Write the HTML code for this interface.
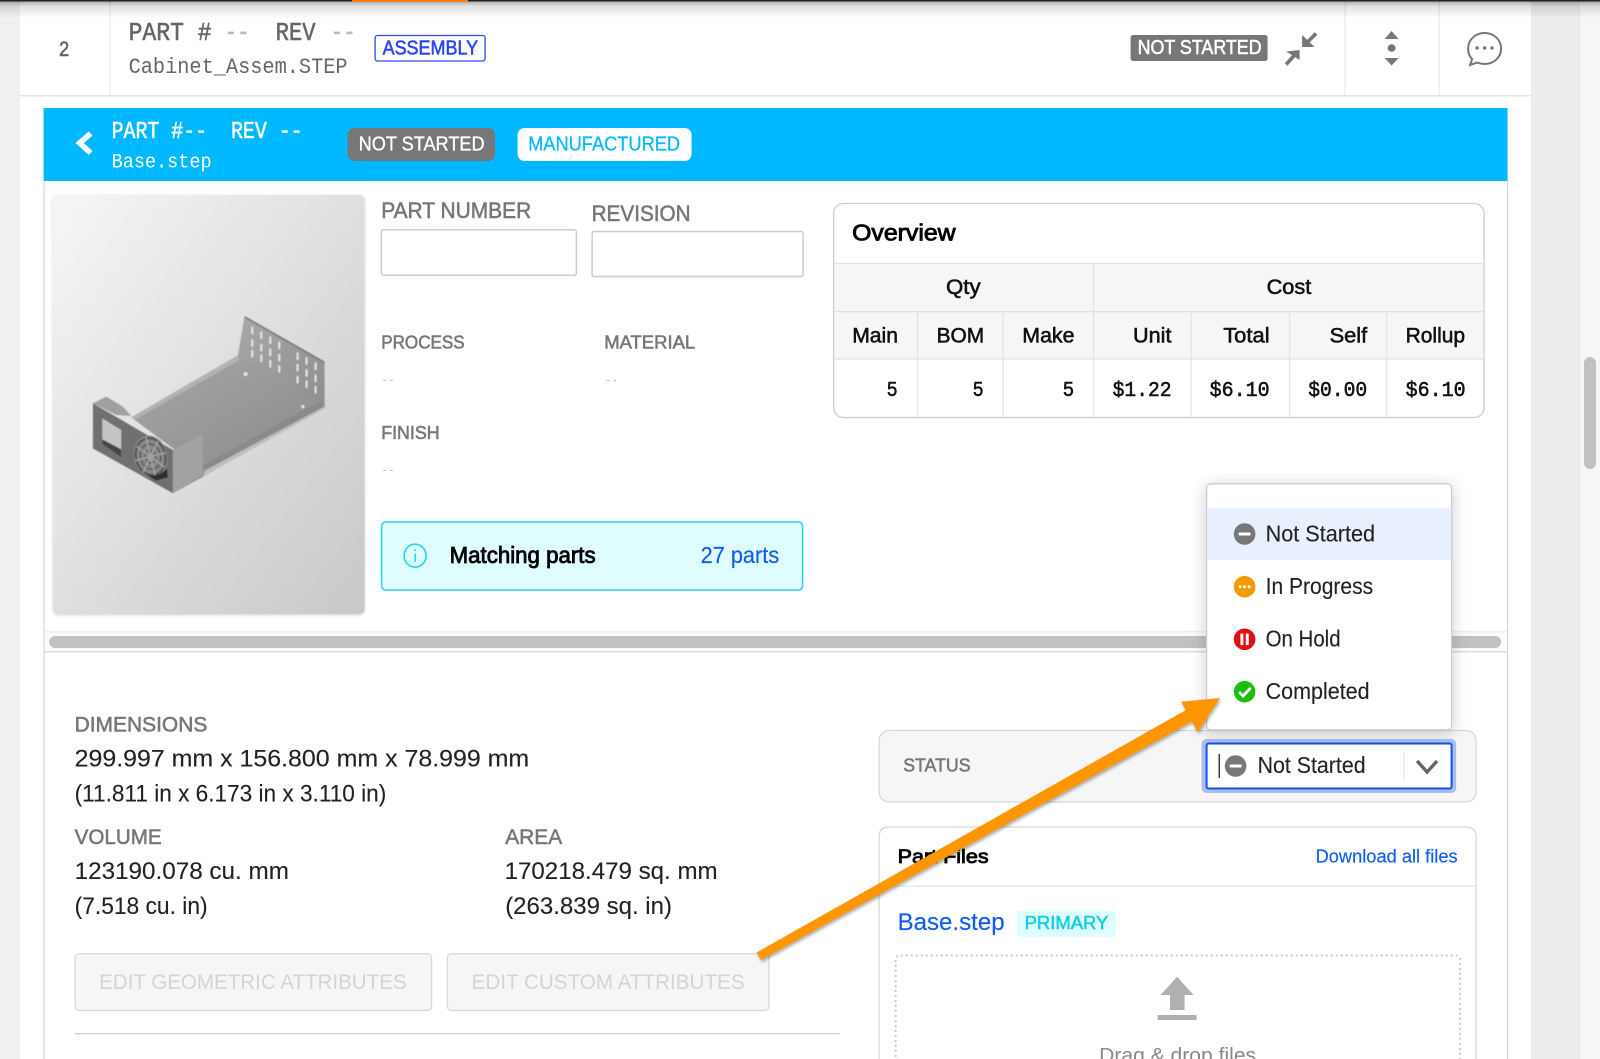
<!DOCTYPE html>
<html lang="en">
<head>
<meta charset="utf-8">
<title>Part detail</title>
<style>
html,body{margin:0;padding:0;background:#fff;width:1600px;height:1059px;overflow:hidden}
svg{display:block;position:absolute;left:0;top:0;filter:blur(.35px)}
text{font-family:"Liberation Sans",sans-serif;white-space:pre}
text.mono{font-family:"Liberation Mono",monospace}
.m{stroke:currentColor;stroke-width:.55}
.b{stroke:currentColor;stroke-width:.85}
.lbl{fill:#777;color:#777}
.val{fill:#222;color:#222;stroke:#222;stroke-width:.12}
.blue{fill:#0d5df0;color:#0d5df0;stroke:#0d5df0;stroke-width:.15}
</style>
</head>
<body>
<svg width="1600" height="1059" viewBox="0 0 1600 1059" xmlns="http://www.w3.org/2000/svg">
<defs>
<linearGradient id="top" x1="0" y1="0" x2="0" y2="1"><stop offset="0" stop-color="#000" stop-opacity=".38"/><stop offset=".35" stop-color="#000" stop-opacity=".12"/><stop offset="1" stop-color="#000" stop-opacity="0"/></linearGradient>
<linearGradient id="card" x1="0" y1="0" x2="1" y2="1"><stop offset="0" stop-color="#f6f6f6"/><stop offset="1" stop-color="#c8c8c8"/></linearGradient>
<linearGradient id="floor" x1="0" y1="0" x2="1" y2="1"><stop offset="0" stop-color="#a6a6a6"/><stop offset="1" stop-color="#8c8c8c"/></linearGradient>
<linearGradient id="wall" x1="0" y1="0" x2="1" y2="1"><stop offset="0" stop-color="#a8a8a8"/><stop offset="1" stop-color="#8e8e8e"/></linearGradient>
<filter id="soft" x="-5%" y="-5%" width="110%" height="110%"><feGaussianBlur stdDeviation="1.2"/></filter>
<filter id="sh" x="-10%" y="-10%" width="130%" height="120%"><feDropShadow dx="0" dy="3" stdDeviation="8" flood-color="#000" flood-opacity=".2"/></filter>
<filter id="ash" x="-5%" y="-5%" width="110%" height="115%"><feDropShadow dx="1" dy="2" stdDeviation="1.5" flood-color="#000" flood-opacity=".35"/></filter>
<filter id="cs" x="-5%" y="-5%" width="110%" height="110%"><feDropShadow dx="0" dy="1" stdDeviation="1.5" flood-color="#000" flood-opacity=".18"/></filter>
</defs>

<!-- page gutters -->
<rect x="0" y="0" width="1600" height="1059" fill="#fff"/>
<rect x="0" y="0" width="20" height="1059" fill="#f0f0f0"/>
<rect x="1531" y="0" width="48" height="1059" fill="#ededed"/>
<rect x="1579" y="0" width="21" height="1059" fill="#f6f6f6"/>
<rect x="1579" y="0" width="1" height="1059" fill="#e6e6e6"/>
<rect x="1584" y="357" width="12" height="112" rx="6" fill="#c1c1c1"/>

<g transform="translate(-.4 0)">
<!-- list row -->
<rect x="20" y="95" width="1511" height="1.5" fill="#e4e4e4"/>
<rect x="110" y="0" width="1" height="95" fill="#e4e4e4"/>
<rect x="1345" y="0" width="1" height="95" fill="#e4e4e4"/>
<rect x="1439" y="0" width="1" height="95" fill="#e4e4e4"/>
<text class="mono m" x="59" y="56" font-size="22" fill="#666" color="#666" textLength="11" lengthAdjust="spacingAndGlyphs">2</text>
<text class="mono m" x="129" y="40" font-size="26" fill="#666" color="#666" textLength="83" lengthAdjust="spacingAndGlyphs">PART #</text>
<text class="mono m" x="225" y="40" font-size="26" fill="#bbb" color="#bbb" textLength="25" lengthAdjust="spacingAndGlyphs">--</text>
<text class="mono m" x="276" y="40" font-size="26" fill="#666" color="#666" textLength="40" lengthAdjust="spacingAndGlyphs">REV</text>
<text class="mono m" x="331" y="40" font-size="26" fill="#bbb" color="#bbb" textLength="25" lengthAdjust="spacingAndGlyphs">--</text>
<text class="mono" x="129" y="73" font-size="22" fill="#666" textLength="219" lengthAdjust="spacingAndGlyphs">Cabinet_Assem.STEP</text>
<rect x="375.5" y="35.5" width="110" height="25.5" rx="2.5" fill="#fff" stroke="#2b4bf0" stroke-width="1.3"/>
<text class="m" x="383" y="54.3" font-size="20" fill="#2b45f0" color="#2b45f0" textLength="95.5" lengthAdjust="spacingAndGlyphs">ASSEMBLY</text>
<rect x="1131" y="35" width="137" height="26" rx="2.5" fill="#777"/>
<text class="m" x="1138" y="54" font-size="20" fill="#fff" color="#fff" textLength="124" lengthAdjust="spacingAndGlyphs">NOT STARTED</text>
<!-- compress icon -->
<g fill="#777" stroke="none">
<path d="M1302.5 35 L1302.5 47 L1315 47 Z"/>
<path d="M1306 44 L1316.500 33.500" stroke="#777" stroke-width="3.6"/>
<path d="M1300 50 L1286.5 51.500 L1300 60 Z"/>
<path d="M1296 54 L1286.500 64.500" stroke="#777" stroke-width="3.6"/>
</g>
<!-- sort icon -->
<path d="M1392 31 L1399 39 L1385 39 Z" fill="#777"/>
<ellipse cx="1392" cy="48" rx="4" ry="3.8" fill="#777"/>
<path d="M1385 58 L1399 58 L1392 65.5 Z" fill="#777"/>
<!-- chat icon -->
<path d="M1485 33 C1475.5 33 1468.5 40 1468.5 48.5 C1468.5 53 1470 56.5 1472.5 59 L1470.5 65 L1477.5 62.5 C1480 63.5 1482.5 64 1485 64 C1494.5 64 1501.5 57 1501.5 48.5 C1501.5 40 1494.5 33 1485 33 Z" fill="none" stroke="#777" stroke-width="2"/>
<circle cx="1477.5" cy="48" r="1.7" fill="#777"/><circle cx="1485" cy="48" r="1.7" fill="#777"/><circle cx="1492.5" cy="48" r="1.7" fill="#777"/>

<!-- detail panel frame -->
<rect x="44" y="181" width="1" height="878" fill="#cfcfcf"/>
<rect x="1507.5" y="181" width="1" height="878" fill="#cfcfcf"/>
<rect x="44" y="108" width="1464" height="73" fill="#00b8ff"/>
<path d="M91 133.5 L80 143 L91 153" fill="none" stroke="#fff" stroke-width="5.5"/>
<text class="mono m" x="112" y="138" font-size="24" fill="#fff" color="#fff" textLength="191" lengthAdjust="spacingAndGlyphs">PART #--  REV --</text>
<text class="mono" x="112" y="167.5" font-size="20.5" fill="#fff" textLength="100" lengthAdjust="spacingAndGlyphs">Base.step</text>
<rect x="348" y="128" width="147.5" height="33" rx="7" fill="#777"/>
<text class="m" style="stroke-width:.3" x="359" y="150.3" font-size="20" fill="#fff" color="#fff" textLength="126" lengthAdjust="spacingAndGlyphs">NOT STARTED</text>
<rect x="518" y="128" width="174" height="33" rx="7" fill="#fff"/>
<text class="m" style="stroke-width:.25" x="528.5" y="150.3" font-size="20" fill="#00b8ff" color="#00b8ff" textLength="152" lengthAdjust="spacingAndGlyphs">MANUFACTURED</text>

<!-- part image card -->
<rect x="53.5" y="195" width="311.5" height="419" rx="5" fill="url(#card)" filter="url(#cs)"/>
<g transform="translate(60 280) scale(.3333)" filter="url(#soft)">
<path d="M430 552 L780 362 L797 378 L430 590 L340 640 Z" fill="#8a8a8a"/>
<path d="M435 572 L797 378 L798 384 L430 590 Z" fill="#bdbdbd"/>
<path d="M215 412 L535 226 L780 364 L430 555 L340 505 Z" fill="url(#floor)"/>
<path d="M215 412 L535 226 L540 240 L225 420 Z" fill="#b2b2b2"/>
<path d="M555 108 L795 245 L795 378 L775 362 L550 235 L535 226 Z" fill="url(#wall)"/>
<path d="M555 108 L795 245 L795 250 L555 113 Z" fill="#777"/>
<g fill="#e6e6e6">
<rect x="575" y="140" width="6" height="22"/><rect x="575" y="178" width="6" height="22"/><rect x="575" y="210" width="6" height="22"/>
<rect x="602" y="155" width="6" height="22"/><rect x="602" y="192" width="6" height="22"/><rect x="602" y="224" width="6" height="22"/>
<rect x="629" y="170" width="6" height="22"/><rect x="629" y="206" width="6" height="22"/><rect x="629" y="240" width="6" height="22"/>
<rect x="656" y="185" width="6" height="22"/><rect x="656" y="222" width="6" height="22"/><rect x="656" y="256" width="6" height="22"/>
<rect x="711" y="218" width="6" height="22"/><rect x="711" y="252" width="6" height="22"/><rect x="711" y="288" width="6" height="22"/>
<rect x="738" y="232" width="6" height="22"/><rect x="738" y="268" width="6" height="22"/><rect x="738" y="302" width="6" height="22"/>
<rect x="765" y="248" width="6" height="22"/><rect x="765" y="284" width="6" height="22"/><rect x="765" y="318" width="6" height="22"/>
</g>
<circle cx="558" cy="282" r="6" fill="#e4e4e4"/><circle cx="730" cy="380" r="5" fill="#e4e4e4"/>
<path d="M100 370 L140 350 L190 380 L215 408 L170 405 Z" fill="#a0a0a0"/>
<path d="M340 510 L430 460 L430 585 L340 640 Z" fill="#a2a2a2"/>
<path d="M100 370 L340 510 L340 640 L100 505 Z" fill="#707070"/>
<path d="M128 415 L185 450 L185 532 L128 492 Z" fill="#c4c4c4"/>
<path d="M128 478 L185 508 L185 532 L128 492 Z" fill="#444"/>
<g transform="rotate(-14 273 530)" fill="none">
<ellipse cx="273" cy="530" rx="50" ry="64" fill="#888"/>
<ellipse cx="273" cy="530" rx="44" ry="56" stroke="#505050" stroke-width="6"/>
<ellipse cx="273" cy="530" rx="30" ry="38" stroke="#606060" stroke-width="5"/>
<ellipse cx="273" cy="530" rx="15" ry="19" stroke="#606060" stroke-width="5"/>
<path d="M273 470 V590 M225 530 H320 M240 490 L306 570 M306 490 L240 570" stroke="#a2a2a2" stroke-width="5"/>
</g>
<path d="M238 572 Q285 605 322 565 L325 592 L290 602 Z" fill="#2e2e2e"/>
</g>

<!-- form fields -->
<text class="lbl m" x="381.6" y="218" font-size="22.5" textLength="150" lengthAdjust="spacingAndGlyphs">PART NUMBER</text>
<rect x="381.8" y="229.8" width="195" height="45.5" rx="2" fill="#fff" stroke="#ccc" stroke-width="1.5"/>
<text class="lbl m" x="592" y="221" font-size="22.5" textLength="99" lengthAdjust="spacingAndGlyphs">REVISION</text>
<rect x="592.5" y="231.5" width="211" height="45" rx="2" fill="#fff" stroke="#ccc" stroke-width="1.5"/>
<text class="lbl m" x="381.6" y="348.3" font-size="18" textLength="83.5" lengthAdjust="spacingAndGlyphs">PROCESS</text>
<text class="lbl m" x="604.6" y="348.3" font-size="18" textLength="91" lengthAdjust="spacingAndGlyphs">MATERIAL</text>
<text class="lbl m" x="381.6" y="439" font-size="18" textLength="58.5" lengthAdjust="spacingAndGlyphs">FINISH</text>
<text class="mono" x="381.6" y="384" font-size="14" fill="#c4c4c4" textLength="13.500" lengthAdjust="spacingAndGlyphs">--</text>
<text class="mono" x="605" y="384" font-size="14" fill="#c4c4c4" textLength="13.500" lengthAdjust="spacingAndGlyphs">--</text>
<text class="mono" x="381.6" y="474" font-size="14" fill="#c4c4c4" textLength="13.500" lengthAdjust="spacingAndGlyphs">--</text>

<!-- matching parts -->
<rect x="382" y="522" width="421" height="68" rx="4" fill="#dffcfe" stroke="#1fd6e4" stroke-width="1.5"/>
<ellipse cx="415.5" cy="555.7" rx="11" ry="11.5" fill="none" stroke="#1fd6e4" stroke-width="1.6"/>
<rect x="414.8" y="553.5" width="1.5" height="8.5" fill="#1fd6e4"/><rect x="414.8" y="549" width="1.5" height="2" fill="#1fd6e4"/>
<text class="b" x="450" y="563" font-size="23" fill="#000" color="#000" textLength="146" lengthAdjust="spacingAndGlyphs">Matching parts</text>
<text class="blue" x="701" y="563" font-size="23" textLength="78.6" lengthAdjust="spacingAndGlyphs">27 parts</text>

<!-- overview -->
<rect x="834" y="203.5" width="650.5" height="214" rx="10" fill="#fff" stroke="#ccc" stroke-width="1.3"/>
<path d="M834.7 263.5 H1484 V359 H834.7 Z" fill="#f6f6f6"/>
<path d="M834 263.5 H1484.5 M834 311.7 H1484.5 M834 359 H1484.5" stroke="#e2e2e2" stroke-width="1.3" fill="none"/>
<path d="M1094 263.5 V417 M918 311.7 V417 M1003.5 311.7 V417 M1191.5 311.7 V417 M1290 311.7 V417 M1387 311.7 V417" stroke="#e4e4e4" stroke-width="1.3" fill="none"/>
<text class="b" x="852.5" y="240.7" font-size="23" fill="#000" color="#000" textLength="103.5" lengthAdjust="spacingAndGlyphs">Overview</text>
<g fill="#111" color="#111" font-size="21">
<text class="m" x="946.4" y="294" textLength="34.6" lengthAdjust="spacingAndGlyphs">Qty</text>
<text class="m" x="1267" y="294" textLength="44.7" lengthAdjust="spacingAndGlyphs">Cost</text>
<text class="m" x="852.6" y="342.3" textLength="45.8" lengthAdjust="spacingAndGlyphs">Main</text>
<text class="m" x="937" y="342.3" textLength="47.6" lengthAdjust="spacingAndGlyphs">BOM</text>
<text class="m" x="1022.7" y="342.3" textLength="52.2" lengthAdjust="spacingAndGlyphs">Make</text>
<text class="m" x="1133.4" y="342.3" textLength="38.5" lengthAdjust="spacingAndGlyphs">Unit</text>
<text class="m" x="1223.6" y="342.3" textLength="46.4" lengthAdjust="spacingAndGlyphs">Total</text>
<text class="m" x="1330" y="342.3" textLength="37.6" lengthAdjust="spacingAndGlyphs">Self</text>
<text class="m" x="1406" y="342.3" textLength="59.5" lengthAdjust="spacingAndGlyphs">Rollup</text>
</g>
<g fill="#111" color="#111" font-size="21.5">
<text class="mono m" x="887" y="396" textLength="11" lengthAdjust="spacingAndGlyphs">5</text>
<text class="mono m" x="973" y="396" textLength="11" lengthAdjust="spacingAndGlyphs">5</text>
<text class="mono m" x="1063" y="396" textLength="11.5" lengthAdjust="spacingAndGlyphs">5</text>
<text class="mono m" x="1113" y="396" textLength="59" lengthAdjust="spacingAndGlyphs">$1.22</text>
<text class="mono m" x="1210" y="396" textLength="60" lengthAdjust="spacingAndGlyphs">$6.10</text>
<text class="mono m" x="1308.6" y="396" textLength="59" lengthAdjust="spacingAndGlyphs">$0.00</text>
<text class="mono m" x="1406" y="396" textLength="60" lengthAdjust="spacingAndGlyphs">$6.10</text>
</g>

<!-- horizontal scrollbar -->
<rect x="45" y="631" width="1462" height="21" fill="#fbfbfb"/>
<rect x="45" y="631" width="1462" height="1.5" fill="#eee"/>
<rect x="45" y="651" width="1462" height="1.5" fill="#dcdcdc"/>
<rect x="49.5" y="636" width="1452" height="12" rx="6" fill="#c1c1c1"/>

<!-- attributes -->
<text class="lbl m" x="75" y="731.7" font-size="21.5" textLength="132.7" lengthAdjust="spacingAndGlyphs">DIMENSIONS</text>
<text class="val" x="75" y="766.7" font-size="24" textLength="454.6" lengthAdjust="spacingAndGlyphs">299.997 mm x 156.800 mm x 78.999 mm</text>
<text class="val" x="75" y="801.7" font-size="24" textLength="311.7" lengthAdjust="spacingAndGlyphs">(11.811 in x 6.173 in x 3.110 in)</text>
<text class="lbl m" x="75" y="844" font-size="21.5" textLength="87" lengthAdjust="spacingAndGlyphs">VOLUME</text>
<text class="lbl m" x="505.6" y="844" font-size="21.5" textLength="57" lengthAdjust="spacingAndGlyphs">AREA</text>
<text class="val" x="75" y="879" font-size="24" textLength="214.3" lengthAdjust="spacingAndGlyphs">123190.078 cu. mm</text>
<text class="val" x="505" y="879" font-size="24" textLength="213" lengthAdjust="spacingAndGlyphs">170218.479 sq. mm</text>
<text class="val" x="75" y="914" font-size="24" textLength="133" lengthAdjust="spacingAndGlyphs">(7.518 cu. in)</text>
<text class="val" x="505.6" y="914" font-size="24" textLength="166.8" lengthAdjust="spacingAndGlyphs">(263.839 sq. in)</text>
<rect x="75.5" y="953.8" width="356.5" height="56.7" rx="4" fill="#f6f6f6" stroke="#d8d8d8" stroke-width="1.3"/>
<text x="99.5" y="989" font-size="21.5" fill="#d4d4d4" textLength="307.5" lengthAdjust="spacingAndGlyphs">EDIT GEOMETRIC ATTRIBUTES</text>
<rect x="447.8" y="953.8" width="321.5" height="56.7" rx="4" fill="#f6f6f6" stroke="#d8d8d8" stroke-width="1.3"/>
<text x="472" y="989" font-size="21.5" fill="#d4d4d4" textLength="273" lengthAdjust="spacingAndGlyphs">EDIT CUSTOM ATTRIBUTES</text>
<rect x="75" y="1033" width="765" height="1.3" fill="#cfcfcf"/>

<!-- status -->
<rect x="879.5" y="730.5" width="597" height="71.5" rx="10" fill="#f6f6f6" stroke="#d8d8d8" stroke-width="1.3"/>
<text class="lbl m" x="903.6" y="771.7" font-size="18" textLength="67.4" lengthAdjust="spacingAndGlyphs">STATUS</text>
<rect x="1202" y="739" width="254.6" height="54" rx="5" fill="#a9bdf3"/>
<rect x="1207" y="743.5" width="245" height="45" rx="2" fill="#fff" stroke="#1a50e8" stroke-width="2"/>
<rect x="1219" y="754" width="1.3" height="24" fill="#222"/>
<circle cx="1236" cy="766" r="10.8" fill="#777"/><rect x="1230" y="764.5" width="12" height="3" rx="1" fill="#fff"/>
<text class="val" x="1258" y="773" font-size="23" textLength="108" lengthAdjust="spacingAndGlyphs">Not Started</text>
<rect x="1404" y="752" width="1" height="28" fill="#ddd"/>
<path d="M1417.5 761 L1427.5 772 L1437.5 761" fill="none" stroke="#666" stroke-width="3.4"/>

<!-- part files -->
<path d="M879.5 1062 V837 Q879.5 827 889.5 827 H1466.5 Q1476.5 827 1476.5 837 V1062" fill="#fff" stroke="#d8d8d8" stroke-width="1.3"/>
<rect x="880" y="885.5" width="596" height="1.3" fill="#e6e6e6"/>
<text class="b" x="898" y="863" font-size="19.5" fill="#000" color="#000" textLength="91" lengthAdjust="spacingAndGlyphs">Part Files</text>
<text class="blue" x="1316" y="862.7" font-size="18.5" textLength="142" lengthAdjust="spacingAndGlyphs">Download all files</text>
<text class="blue" x="898" y="930" font-size="24.5" textLength="107" lengthAdjust="spacingAndGlyphs">Base.step</text>
<rect x="1017" y="910.7" width="99" height="26" rx="3" fill="#dffcfe"/>
<text class="m" x="1025" y="929" font-size="18.5" fill="#10d0e0" color="#10d0e0" textLength="83.7" lengthAdjust="spacingAndGlyphs">PRIMARY</text>
<path d="M896 1062 V960 Q896 955.5 900 955.5 H1456 Q1460.5 955.5 1460.5 960 V1062" fill="none" stroke="#ccc" stroke-width="2" stroke-dasharray="2 3"/>
<path d="M1177.5 976.7 L1194 995 L1185 995 L1185 1010 L1170.4 1010 L1170.4 995 L1161 995 Z" fill="#b0b0b0"/>
<rect x="1158" y="1015" width="39" height="5" fill="#b0b0b0"/>
<text x="1099.5" y="1062" font-size="20.5" fill="#888" textLength="157" lengthAdjust="spacingAndGlyphs">Drag &amp; drop files</text>

<!-- dropdown -->
<rect x="1207" y="483.8" width="245" height="246" rx="4" fill="#fff" stroke="#ccc" stroke-width="1.3" filter="url(#sh)"/>
<rect x="1207.5" y="507.7" width="244" height="52.3" fill="#e8f0fd"/>
<circle cx="1245" cy="534" r="10.8" fill="#777"/><rect x="1239" y="532.5" width="12" height="3" rx="1" fill="#fff"/>
<text class="val" x="1266" y="541.7" font-size="23" textLength="109.5" lengthAdjust="spacingAndGlyphs">Not Started</text>
<circle cx="1245" cy="586.7" r="10.8" fill="#f59a00"/><circle cx="1240.5" cy="586.7" r="1.5" fill="#fff"/><circle cx="1245" cy="586.7" r="1.5" fill="#fff"/><circle cx="1249.5" cy="586.7" r="1.5" fill="#fff"/>
<text class="val" x="1266" y="594" font-size="23" textLength="107.5" lengthAdjust="spacingAndGlyphs">In Progress</text>
<circle cx="1245" cy="639.3" r="10.8" fill="#e01010"/><rect x="1240.8" y="633.5" width="3" height="11.6" rx=".8" fill="#fff"/><rect x="1246.2" y="633.5" width="3" height="11.6" rx=".8" fill="#fff"/>
<text class="val" x="1266" y="646.7" font-size="23" textLength="75" lengthAdjust="spacingAndGlyphs">On Hold</text>
<circle cx="1245" cy="691.7" r="10.8" fill="#1cc00c"/><path d="M1239.5 692 L1243.5 696 L1251 688" fill="none" stroke="#fff" stroke-width="2.8"/>
<text class="val" x="1266" y="699" font-size="23" textLength="104" lengthAdjust="spacingAndGlyphs">Completed</text>

<!-- annotation arrow -->
<g filter="url(#ash)">
<path d="M757 952.5 L1190 708 L1196.5 719 L761.5 960 Z" fill="#ff9600"/>
<path d="M1220.5 698 L1181.6 701.7 L1198 732 Z" fill="#ff9600"/>
</g>
</g>

<!-- top shadow -->
<rect x="0" y="0" width="1600" height="18" fill="url(#top)"/>
<rect x="0" y="0" width="1600" height="1.5" fill="#222"/>
<rect x="352" y="0" width="116" height="2" fill="#ff7d14"/>
</svg>
</body>
</html>
